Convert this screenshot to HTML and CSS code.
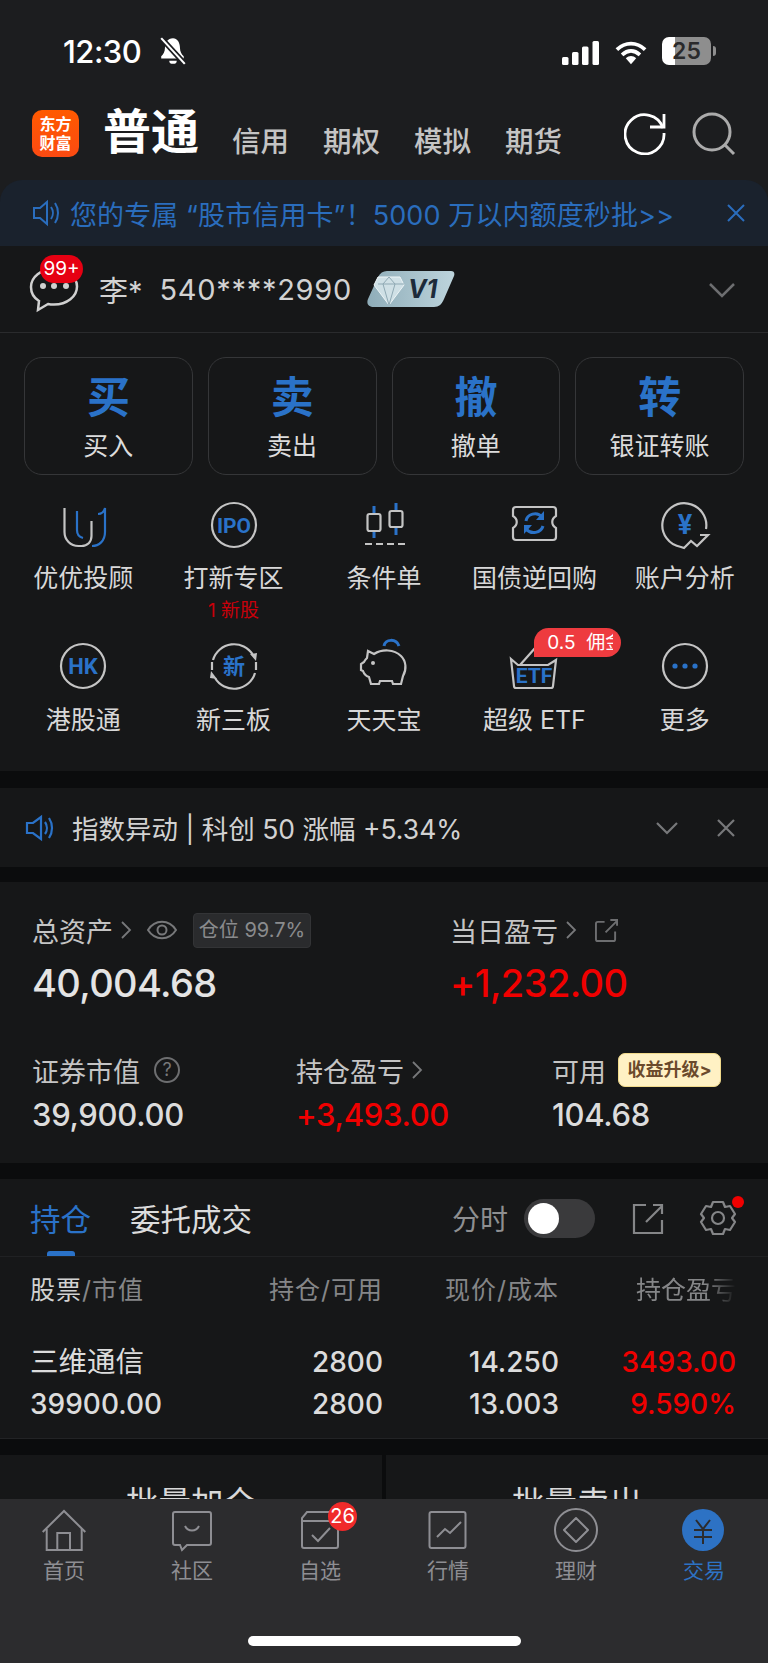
FILE: index.html
```html
<!DOCTYPE html>
<html>
  <head>
    <meta charset="utf-8">
    <title>交易</title>
    <link rel="stylesheet" href="styles.css">
  </head>
  <body>
    <div class="top">
      <div class="status">
        <div class="time">12:30
          <svg class="bell" width="30" height="30" viewBox="0 0 28 28"><path d="M14 2c-5 0-7.500 4-7.500 9 0 4-1.500 6-3.500 8v2h21v-2c-2-2-3.500-4-3.500-8 0-5-2.500-9-6.500-9z" fill="#fff"/><path d="M10.500 23a3.500 3 0 0 0 7 0z" fill="#fff"/><path d="M3 2l22 24" stroke="#1c1d20" stroke-width="5"/><path d="M3 2l22 24" stroke="#fff" stroke-width="2"/></svg>
        </div>
        <div class="sys">
          <svg width="38" height="24" viewBox="0 0 38 24" fill="#fff"><rect x="0" y="16" width="6.500" height="8" rx="1.500"/><rect x="10" y="11" width="6.500" height="13" rx="1.500"/><rect x="20" y="5.500" width="6.500" height="18.500" rx="1.500"/><rect x="30.500" y="0" width="6.500" height="24" rx="1.500"/></svg>
          <svg width="32" height="24" viewBox="0 0 34 25"><path d="M2 9c9-8.500 21-8.500 30 0M7.500 14.500c6-5.500 13-5.500 19 0" fill="none" stroke="#fff" stroke-width="4"/><path d="M11.500 18c3.500-3 7.500-3 11 0l-5.500 6.500z" fill="#fff"/></svg>
          <div class="battery">25</div>
        </div>
      </div>
      <div class="header">
        <div class="logo"><span>东方</span><span>财富</span></div>
        <div class="mode">普通</div>
        <div class="mode-tabs"><span>信用</span><span>期权</span><span>模拟</span><span>期货</span></div>
        <svg class="refresh" width="44" height="44" viewBox="0 0 44 44" fill="none" stroke="#fff" stroke-width="2.800"><path d="M39 17a19.500 19.500 0 1 0 1 5"/><path d="M26 16h14V3"/></svg>
        <svg class="search" width="46" height="46" viewBox="0 0 46 46" fill="none" stroke="#ababab" stroke-width="3"><circle cx="21" cy="20" r="18"/><path d="M34 33l9 9"/></svg>
      </div>
      <div class="banner">
        <svg width="28" height="28" viewBox="0 0 28 28" fill="none" stroke="#2a6dbd" stroke-width="2"><path d="M2 9h6l7-6v22l-7-6H2z"/><path d="M19 8c2.500 3.500 2.500 8.500 0 12M23 4c4 6 4 14 0 20"/></svg>
        <span class="banner-text">您的专属 “股市信用卡”！5000 万以内额度秒批&gt;&gt;</span>
        <svg class="banner-x" width="20" height="20" viewBox="0 0 20 20" stroke="#2a6dbd" stroke-width="2"><path d="M2 2l16 16M18 2L2 18"/></svg>
      </div>
    </div>

    <div class="account">
      <div class="chat">
        <svg width="50" height="46" viewBox="0 0 50 46" fill="none" stroke="#d0d0d0" stroke-width="2.500"><path d="M25 2C12 2 2 10 2 20c0 6 3 11 8 14l-1 9 10-6c2 .5 4 .6 6 .6 13 0 23-8 23-18S38 2 25 2z"/><g fill="#d0d0d0" stroke="none"><circle cx="14" cy="19" r="3"/><circle cx="25" cy="19" r="3"/><circle cx="37" cy="19" r="3"/></g></svg>
        <span class="chat-badge">99+</span>
      </div>
      <span class="acct-name">李*</span>
      <span class="acct-no">540****2990</span>
      <div class="vip">
        <svg width="88" height="36" viewBox="0 0 88 36"><defs><linearGradient id="vipg" x1="0" x2="1"><stop offset="0" stop-color="#8fadb9"/><stop offset="1" stop-color="#bdd4dc"/></linearGradient></defs><path d="M11 6C13 2 16 0 20 0h64c3 0 4 2 3 5L77 28c-2 5-5 8-10 8H7c-5 0-8-3-6-8z" fill="url(#vipg)"/><path d="M11 6h22l4 8-15 20L7 14z" fill="#cfe0e6" stroke="#eef5f7"/><path d="M11 13h26M22 34l-6-21 6-7 6 7z" fill="none" stroke="#8fa9b4"/></svg>
        <span>V1</span>
      </div>
      <svg class="acct-more" width="28" height="16" viewBox="0 0 28 16" fill="none" stroke="#6d6e70" stroke-width="2.500"><path d="M2 2l12 12L26 2"/></svg>
    </div>

    <div class="panel">
      <div class="actions">
        <div class="action"><b>买</b><span>买入</span></div>
        <div class="action"><b>卖</b><span>卖出</span></div>
        <div class="action"><b>撤</b><span>撤单</span></div>
        <div class="action"><b>转</b><span>银证转账</span></div>
      </div>
      <div class="tools">
        <div class="tool">
          <svg width="60" height="60" viewBox="0 0 60 60" fill="none" stroke-width="2.200"><path d="M11.500 14v24c0 8 6 14 14 14h3c6 0 10-4 10-10V27" stroke="#c4c4c4"/><path d="M24 17v19c0 4 2 7 6 8" stroke="#2a72c8"/><path d="M45 20c3 0 6-2 7-6v24c0 9-6 14-13 14" stroke="#2a72c8"/></svg>
          <span>优优投顾</span>
        </div>
        <div class="tool">
          <svg width="60" height="60" viewBox="0 0 60 60" fill="none"><circle cx="30" cy="31" r="22" stroke="#c4c4c4" stroke-width="2.200"/><text x="30" y="39" class="ico-txt" font-size="21">IPO</text></svg>
          <span>打新专区</span><em>1 新股</em>
        </div>
        <div class="tool">
          <svg width="60" height="60" viewBox="0 0 60 60" fill="none" stroke-width="2.200"><path d="M20 12v32M42 9v32" stroke="#2a72c8" stroke-width="3"/><rect x="13.500" y="20" width="13" height="17" rx="2" fill="#161718" stroke="#c4c4c4"/><rect x="35.500" y="17" width="13" height="16" rx="2" fill="#161718" stroke="#c4c4c4"/><path d="M11 50h40" stroke="#c4c4c4" stroke-dasharray="7 4"/></svg>
          <span>条件单</span>
        </div>
        <div class="tool">
          <svg width="60" height="60" viewBox="0 0 60 60" fill="none" stroke-width="2.200"><path d="M12 13h37c2 0 3 1 3 3v6c-5 3-5 9 0 12v9c0 2-1 3-3 3H12c-2 0-3-1-3-3v-9c5-3 5-9 0-12v-6c0-2 1-3 3-3z" stroke="#c4c4c4"/><path d="M22 27c1-7 11-10 16-4M39 32c-2 7-12 9-17 3" stroke="#2a72c8" stroke-width="3"/><path d="M40 17v9h-8zM20 40v-9h8z" fill="#2a72c8"/></svg>
          <span>国债逆回购</span>
        </div>
        <div class="tool">
          <svg width="60" height="60" viewBox="0 0 60 60" fill="none"><path d="M51 35a22 22 0 1 0-25 18l3 1 7-7 6 5 11-11-8 0" stroke="#c4c4c4" stroke-width="2.200"/><text x="30" y="40" class="ico-txt" font-size="27">¥</text></svg>
          <span>账户分析</span>
        </div>
        <div class="tool">
          <svg width="60" height="60" viewBox="0 0 60 60" fill="none"><circle cx="30" cy="30" r="22" stroke="#c4c4c4" stroke-width="2.200"/><text x="30" y="38" class="ico-txt" font-size="22">HK</text></svg>
          <span>港股通</span>
        </div>
        <div class="tool">
          <svg width="60" height="60" viewBox="0 0 60 60" fill="none"><path d="M9 24a22 22 0 0 1 40-5M52 26v8M51 37a22 22 0 0 1-40 5M8 34v-8" stroke="#c4c4c4" stroke-width="2.200"/><path d="M46 18l7-1-1 8zM13 43l-7-1 1-7z" fill="#c4c4c4"/><text x="30" y="38" class="ico-txt" font-size="22">新</text></svg>
          <span>新三板</span>
        </div>
        <div class="tool">
          <svg width="60" height="60" viewBox="-2 0 60 60" fill="none" stroke-width="2.200"><path d="M28 10c1-7 12-8 15 0" stroke="#2a72c8" stroke-width="3"/><path d="M12 15l6 3c8-5 20-5 27 2 5 5 6 13 2 20l-2 8h-8l-1-3H24l-1 3h-8l-2-7c-3-1-5-3-6-6l-2-1v-6l3-2c1-2 2-3 3-4z" stroke="#c4c4c4"/><circle cx="17" cy="27" r="2" fill="#c4c4c4"/></svg>
          <span>天天宝</span>
        </div>
        <div class="tool">
          <svg width="60" height="60" viewBox="0 0 60 60" fill="none" stroke-width="2.200"><path d="M16 29L32 11M7 23l7 6h30l8-5-3 26c0 1-1 2-2 2H12c-1 0-2-1-2-2z" stroke="#c4c4c4"/><text x="30" y="47" class="ico-txt" font-size="21">ETF</text></svg>
          <span>超级 ETF</span>
          <div class="promo"><i>0.5&nbsp;&nbsp;佣金</i></div>
        </div>
        <div class="tool">
          <svg width="60" height="60" viewBox="0 0 60 60" fill="none"><circle cx="30" cy="30" r="22" stroke="#c4c4c4" stroke-width="2.200"/><g fill="#2a72c8"><circle cx="20" cy="30" r="2.600"/><circle cx="30" cy="30" r="2.600"/><circle cx="40" cy="30" r="2.600"/></g></svg>
          <span>更多</span>
        </div>
      </div>
    </div>

    <div class="notice">
      <svg width="30" height="30" viewBox="0 0 30 30" fill="none" stroke="#2a72c8" stroke-width="2.200"><path d="M2 10h6l8-6v22l-8-6H2z"/><path d="M20 9c2.500 3.500 2.500 8.500 0 12M24 5c4 6 4 14 0 20"/></svg>
      <span class="notice-text">指数异动 | 科创 50 涨幅 +5.34%</span>
      <svg class="notice-down" width="22" height="14" viewBox="0 0 22 14" fill="none" stroke="#77787a" stroke-width="2.200"><path d="M1 2l10 10L21 2"/></svg>
      <svg class="notice-x" width="18" height="18" viewBox="0 0 18 18" stroke="#77787a" stroke-width="2.200"><path d="M1 1l16 16M17 1L1 17"/></svg>
    </div>

    <div class="assets">
      <div class="assets-top">
        <div class="stat stat-total">
          <div class="stat-label">总资产
            <svg class="arrow" width="11" height="20" viewBox="0 0 11 20" fill="none" stroke="#77787a" stroke-width="1.800"><path d="M1 2l8 8-8 8"/></svg>
            <svg class="eye" width="30" height="20" viewBox="0 0 30 20" fill="none" stroke="#77787a" stroke-width="2"><path d="M1 10c7-11 21-11 28 0-7 11-21 11-28 0z"/><circle cx="15" cy="10" r="4.500"/></svg>
            <span class="tag-pos">仓位 99.7%</span>
          </div>
          <div class="big">40,004.68</div>
        </div>
        <div class="stat stat-day">
          <div class="stat-label">当日盈亏
            <svg class="arrow" width="11" height="20" viewBox="0 0 11 20" fill="none" stroke="#77787a" stroke-width="1.800"><path d="M1 2l8 8-8 8"/></svg>
            <svg class="out" width="23" height="23" viewBox="0 0 24 24" fill="none" stroke="#6d6e70" stroke-width="2"><path d="M10 3H3c-1 0-2 1-2 2v16c0 1 1 2 2 2h16c1 0 2-1 2-2v-8"/><path d="M11 14L23 2M16 1h7v6"/></svg>
          </div>
          <div class="big red">+1,232.00</div>
        </div>
      </div>
      <div class="assets-bottom">
        <div class="stat stat-mv">
          <div class="stat-label">证券市值
            <span class="help">?</span>
          </div>
          <div class="mid">39,900.00</div>
        </div>
        <div class="stat stat-pl">
          <div class="stat-label">持仓盈亏
            <svg class="arrow" width="11" height="20" viewBox="0 0 11 20" fill="none" stroke="#77787a" stroke-width="1.800"><path d="M1 2l8 8-8 8"/></svg>
          </div>
          <div class="mid red">+3,493.00</div>
        </div>
        <div class="stat">
          <div class="stat-label">可用
            <span class="tag-gold">收益升级&gt;</span>
          </div>
          <div class="mid">104.68</div>
        </div>
      </div>
    </div>

    <div class="positions">
      <div class="pos-tabs">
        <span class="pos-tab on">持仓</span>
        <span class="pos-tab">委托成交</span>
        <span class="pos-time">分时</span>
        <span class="toggle"><i></i></span>
        <svg class="pos-out" width="32" height="32" viewBox="0 0 32 32" fill="none" stroke="#858688" stroke-width="2.200"><path d="M14 2H2v28h28V17"/><path d="M14 19L30 3M21 2h9v9"/></svg>
        <div class="gear">
          <svg width="38" height="38" viewBox="0 0 38 38" fill="none" stroke="#858688" stroke-width="2.200"><path d="M14 3h10l2 5 5-1 5 8-3 4 3 4-5 8-5-1-2 5H14l-2-5-5 1-5-8 3-4-3-4 5-8 5 1z" stroke-linejoin="round"/><circle cx="19" cy="19" r="6"/></svg>
          <span class="gear-dot"></span>
        </div>
      </div>
      <div class="pos-row pos-head">
        <span><b>股票</b>/市值</span>
        <span class="num">持仓/可用</span>
        <span class="num">现价/成本</span>
        <span class="num fade">持仓盈亏</span>
      </div>
      <div class="pos-row pos-line">
        <span class="stock">三维通信</span>
        <span class="num">2800</span>
        <span class="num">14.250</span>
        <span class="num red">3493.00</span>
      </div>
      <div class="pos-row pos-line">
        <span>39900.00</span>
        <span class="num">2800</span>
        <span class="num">13.003</span>
        <span class="num red">9.590%</span>
      </div>
    </div>

    <div class="batch">
      <div>批量加仓</div>
      <div>批量卖出</div>
    </div>

    <div class="tabbar">
      <div class="tab">
        <svg width="48" height="48" viewBox="0 0 48 48" fill="none" stroke="#8e8e93" stroke-width="2"><path d="M2.700 26L24 5l21.300 21"/><path d="M6.700 23v21h35V23M17.300 44V27H30v17"/></svg>
        <span>首页</span>
      </div>
      <div class="tab">
        <svg width="48" height="48" viewBox="0 0 48 48" fill="none" stroke="#8e8e93" stroke-width="2"><path d="M7 6h34c1 0 2 1 2 2v29c0 1-1 2-2 2H19l-5 5-2-5H7c-1 0-2-1-2-2V8c0-1 1-2 2-2z"/><path d="M17 20c3 6 11 6 14 0"/></svg>
        <span>社区</span>
      </div>
      <div class="tab">
        <svg width="48" height="48" viewBox="0 0 48 48" fill="none" stroke="#8e8e93" stroke-width="2"><path d="M8 42c-1 0-2-1-2-2V12l5-6h29l2 5v29c0 1-1 2-2 2zM6 15h36"/><path d="M16 29l6 6 12-13"/></svg>
        <span>自选</span>
        <b class="tab-badge">26</b>
      </div>
      <div class="tab">
        <svg width="48" height="48" viewBox="0 0 48 48" fill="none" stroke="#8e8e93" stroke-width="2"><rect x="5.500" y="6" width="36" height="36" rx="2"/><path d="M13 31l8-8 5 4 11-11"/></svg>
        <span>行情</span>
      </div>
      <div class="tab">
        <svg width="48" height="48" viewBox="0 0 48 48" fill="none" stroke="#8e8e93" stroke-width="2"><circle cx="24" cy="24" r="21"/><path d="M24 12l12 12-12 12-12-12z" stroke-linejoin="round"/></svg>
        <span>理财</span>
      </div>
      <div class="tab on">
        <svg width="48" height="48" viewBox="0 0 48 48" fill="none"><circle cx="23" cy="24" r="21" fill="#2d72c4"/><path d="M16 14l7 9 7-9M14 24h18M14 31h18M23 23v15" stroke="#2c2c2e" stroke-width="2"/></svg>
        <span>交易</span>
      </div>
      <div class="home-bar"></div>
    </div>
  </body>
</html>
```

FILE: styles.css
```css
html, body { margin: 0; padding: 0; }
body
{
  width: 768px;
  height: 1663px;
  overflow: hidden;
  position: relative;
  background-color: #0b0c0d;
  color: #d2d2d2;
  font-family: Inter, "Noto Sans CJK SC", sans-serif;
}
svg { display: block; flex: none; }
.red { color: #f00000; }

/* status bar and header */
.top { background-color: #1c1d1f; height: 246px; }
.status
{
  height: 78px;
  padding: 12px 57px 0 63px;
  display: flex;
  justify-content: space-between;
  align-items: center;
}
.time
{
  display: flex;
  align-items: center;
  gap: 17px;
  color: #fff;
  font-size: 31px;
  font-weight: 500;
  letter-spacing: -0.5px;
}
.sys { display: flex; align-items: center; gap: 15px; }
.sys svg { margin-top: 4px; }
.battery
{
  width: 49px;
  height: 28px;
  border-radius: 7px;
  background: linear-gradient(to right, #fff 27%, #8e8e8e 27%);
  color: #2a2a2c;
  font-size: 23px;
  font-weight: 600;
  line-height: 28px;
  text-align: center;
  position: relative;
}
.battery::after
{
  content: "";
  position: absolute;
  left: 51px;
  top: 9px;
  width: 3px;
  height: 10px;
  border-radius: 0 3px 3px 0;
  background-color: #8e8e8e;
}
.header { height: 90px; padding-left: 32px; display: flex; align-items: center; position: relative; }
.logo
{
  width: 47px;
  height: 47px;
  margin-top: -3px;
  border-radius: 10px;
  background: linear-gradient(#ff5a00, #fb4a12);
  color: #fff;
  font-size: 16px;
  font-weight: 700;
  line-height: 19px;
  display: flex;
  flex-direction: column;
  align-items: center;
  justify-content: center;
}
.mode { margin-left: 24px; margin-top: -6px; color: #fff; font-size: 48px; font-weight: 700; line-height: 56px; }
.mode-tabs { margin-left: 33px; margin-top: 14px; display: flex; gap: 34px; color: #c4c4c4; font-size: 28.500px; font-weight: 500; line-height: 38px; }
.refresh { position: absolute; left: 624px; top: 21px; }
.search { position: absolute; left: 691px; top: 22px; }
.banner
{
  height: 66px;
  padding: 0 22px 0 32px;
  background-color: #1a222d;
  border-radius: 22px 22px 0 0;
  display: flex;
  align-items: center;
  color: #2a6dbd;
}
.banner-text { margin-left: 10px; font-size: 27px; letter-spacing: 0.1px; white-space: nowrap; }
.banner-x { margin-left: auto; }

/* account row */
.account
{
  height: 86px;
  border-bottom: 1px solid #2a2b2d;
  background-color: #161718;
  display: flex;
  align-items: center;
  padding-left: 29px;
  position: relative;
}
.chat { width: 50px; height: 46px; margin-top: 2px; position: relative; }
.chat-badge
{
  position: absolute;
  left: 11px;
  top: -12px;
  width: 43px;
  height: 28px;
  border-radius: 14px;
  background-color: #e60012;
  color: #fff;
  font-size: 19px;
  line-height: 28px;
  text-align: center;
}
.acct-name { margin-left: 20px; font-size: 29px; }
.acct-no { margin-left: 17px; font-size: 29px; letter-spacing: 0.7px; }
.vip { width: 88px; height: 36px; margin-left: 15px; position: relative; }
.vip span
{
  position: absolute;
  left: 41px;
  top: 0;
  color: #1d2b3a;
  font-size: 25px;
  font-weight: 700;
  font-style: italic;
  line-height: 36px;
}
.acct-more { position: absolute; left: 708px; top: 36px; }

/* trade buttons and tool grid */
.panel { height: 438px; background-color: #161718; padding-top: 24px; box-sizing: border-box; }
.actions { display: flex; gap: 15px; padding: 0 24px; }
.action
{
  flex: 1;
  height: 118px;
  box-sizing: border-box;
  border: 1px solid #353638;
  border-radius: 18px;
  display: flex;
  flex-direction: column;
  align-items: center;
}
.action b { margin-top: 9px; color: #2a72c8; font-size: 43px; font-weight: 700; line-height: 60px; }
.action span { margin-top: 1px; color: #dcdcdc; font-size: 25px; line-height: 36px; }
.tools
{
  display: grid;
  grid-template-columns: repeat(5, 1fr);
  grid-auto-rows: 142px;
  padding: 19px 8px 0;
}
.tool { display: flex; flex-direction: column; align-items: center; position: relative; }
.tool span { margin-top: 6px; color: #d8d8d8; font-size: 25px; line-height: 36px; white-space: nowrap; }
.tool em { margin-top: 1px; color: #c8000a; font-size: 19px; font-style: normal; line-height: 28px; }
.ico-txt { fill: #2a72c8; font-weight: 700; text-anchor: middle; font-family: "Roboto", "Noto Sans CJK SC", sans-serif; }
.promo
{
  position: absolute;
  left: 75px;
  top: -8px;
  width: 87px;
  height: 29px;
  padding-left: 13px;
  box-sizing: border-box;
  background-color: #ee3b3f;
  border-radius: 15px 15px 15px 0;
  color: #fff;
  font-size: 19px;
  line-height: 29px;
}
.promo i { display: block; width: 66px; overflow: hidden; font-style: normal; white-space: nowrap; }

/* notice */
.notice
{
  height: 79px;
  margin-top: 17px;
  background-color: #161718;
  display: flex;
  align-items: center;
  padding-left: 25px;
  position: relative;
}
.notice-text { margin-left: 17px; font-size: 26.500px; white-space: nowrap; }
.notice-down { position: absolute; left: 656px; top: 33px; }
.notice-x { position: absolute; left: 717px; top: 31px; }

/* assets */
.assets { height: 281px; margin-top: 15px; background-color: #161718; box-sizing: border-box; padding: 28px 0 0 32px; }
.assets-top, .assets-bottom { display: flex; }
.assets-bottom { margin-top: 44px; }
.stat-total { width: 418px; }
.stat-mv { width: 264px; }
.stat-pl { width: 256px; }
.stat-label { height: 40px; display: flex; align-items: center; font-size: 27px; color: #c4c4c4; white-space: nowrap; }
.arrow { margin-left: 8px; }
.eye { margin-left: 15px; }
.out { margin-left: 18px; }
.tag-pos
{
  margin-left: 16px;
  width: 118px;
  height: 35px;
  background-color: #2a2b2d;
  border: 1px solid #333436;
  border-radius: 4px;
  box-sizing: border-box;
  color: #8a8b8d;
  font-size: 20px;
  line-height: 33px;
  text-align: center;
}
.big { margin-top: 10px; font-size: 38px; font-weight: 500; letter-spacing: -0.6px; line-height: 46px; color: #e4e4e4; }
.big.red { color: #f00000; }
.help
{
  margin-left: 14px;
  width: 26px;
  height: 26px;
  box-sizing: border-box;
  border: 2px solid #6d6e70;
  border-radius: 50%;
  color: #77787a;
  font-size: 18px;
  line-height: 22px;
  text-align: center;
}
.tag-gold
{
  margin-left: 12px;
  width: 103px;
  height: 34px;
  box-sizing: border-box;
  background-color: #fff1c4;
  border: 1px solid #f0d98a;
  border-radius: 7px;
  color: #6b4a2c;
  font-size: 18px;
  font-weight: 700;
  line-height: 32px;
  text-align: center;
}
.mid { margin-top: 5px; font-size: 31px; font-weight: 500; letter-spacing: -0.3px; line-height: 40px; color: #dcdcdc; }
.mid.red { color: #f00000; }

/* positions */
.positions { height: 260px; margin-top: 16px; background-color: #161718; border-bottom: 1px solid #222325; box-sizing: border-box; }
.pos-tabs { height: 78px; border-bottom: 1px solid #202123; display: flex; align-items: center; padding-left: 30px; position: relative; box-sizing: border-box; }
.pos-tab { margin-right: 39px; font-size: 30.500px; color: #dcdcdc; }
.pos-tab.on { color: #2a72c8; }
.pos-tab.on::after
{
  content: "";
  position: absolute;
  left: 47px;
  bottom: 0;
  width: 28px;
  height: 5px;
  border-radius: 3px 3px 0 0;
  background-color: #2a72c8;
}
.pos-time { position: absolute; left: 452px; top: 19px; color: #8e8f91; font-size: 28px; }
.toggle { position: absolute; left: 524px; top: 20px; width: 71px; height: 39px; border-radius: 20px; background-color: #3a3a3c; }
.toggle i { position: absolute; left: 4px; top: 4px; width: 31px; height: 31px; border-radius: 50%; background-color: #fff; }
.pos-out { position: absolute; left: 632px; top: 24px; }
.gear { position: absolute; left: 699px; top: 20px; }
.gear-dot { position: absolute; left: 33px; top: -3px; width: 12px; height: 12px; border-radius: 50%; background-color: #f00000; }
.pos-row
{
  display: grid;
  grid-template-columns: 223px 130px 176px 177px;
  padding-left: 30px;
  white-space: nowrap;
}
.num { text-align: right; }
.pos-head { height: 26px; padding-top: 20px; margin-bottom: 38px; color: #858688; font-size: 25px; letter-spacing: 1px; line-height: 26px; }
.pos-head b { font-weight: 400; color: #d2d2d2; }
.fade { justify-self: end; width: 100px; letter-spacing: 0; -webkit-mask-image: linear-gradient(to right, #000 70%, transparent); mask-image: linear-gradient(to right, #000 70%, transparent); }
.pos-line { height: 42px; align-items: center; font-size: 28px; font-weight: 500; line-height: 42px; color: #dcdcdc; }
.pos-line .stock { font-size: 28.500px; font-weight: 400; }
.pos-line .red { color: #f00000; }

/* batch buttons under the tab bar */
.batch { height: 60px; margin-top: 16px; display: flex; gap: 4px; }
.batch div { flex: 1; background-color: #161718; color: #d8d8d8; font-size: 32.500px; line-height: 40px; padding-top: 29px; text-align: center; }

/* tab bar */
.tabbar
{
  position: absolute;
  left: 0;
  top: 1499px;
  width: 768px;
  height: 164px;
  background-color: #2c2c2e;
  display: flex;
}
.tab { width: 128px; padding-top: 7px; display: flex; flex-direction: column; align-items: center; position: relative; color: #8e8e93; }
.tab span { margin-top: 4px; font-size: 21px; line-height: 26px; }
.tab.on { color: #2d72c4; }
.tab-badge
{
  position: absolute;
  left: 72px;
  top: 3px;
  width: 29px;
  height: 29px;
  border-radius: 50%;
  background-color: #f02a2a;
  color: #fff;
  font-size: 20px;
  font-weight: 400;
  line-height: 29px;
  text-align: center;
}
.home-bar { position: absolute; left: 248px; top: 137px; width: 273px; height: 10px; border-radius: 5px; background-color: #fff; }
```
